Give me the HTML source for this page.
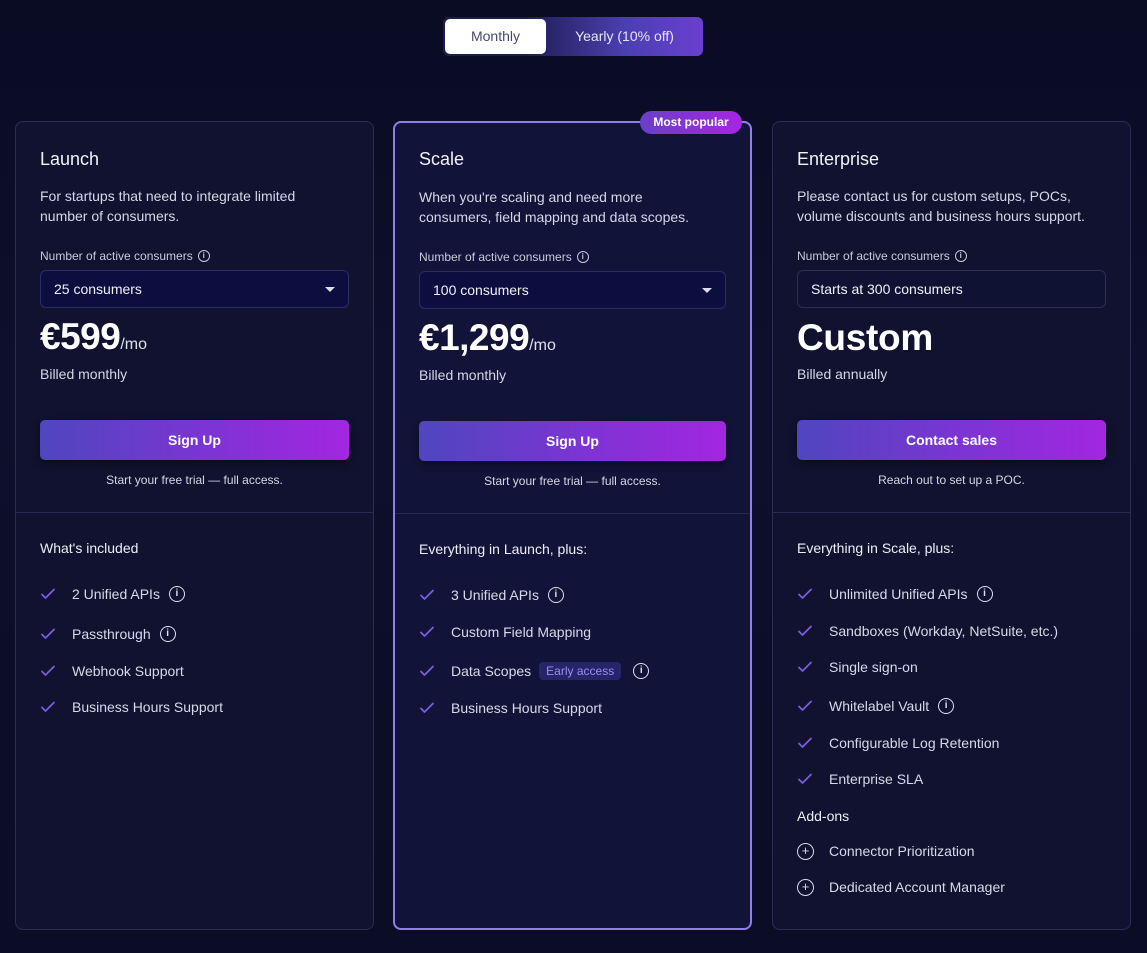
<!DOCTYPE html>
<html><head><meta charset="utf-8"><style>
*{box-sizing:border-box;margin:0;padding:0}
body{width:1147px;height:953px;overflow:hidden;background:linear-gradient(#0a0c24,#0d0f2c 40%,#0b0d26);font-family:"Liberation Sans",sans-serif;color:#e8e8f2;position:relative}
.abs{position:absolute;white-space:nowrap}
.toggle{left:443px;top:17px;width:260px;height:39px;border-radius:6px;background:linear-gradient(90deg,#1d1b50 30%,#4a3fb0 70%,#6a3fd0);}
.toggle .m{position:absolute;left:2px;top:2px;width:101px;height:35px;background:#fff;border-radius:5px;color:#474b6a;font-size:14px;line-height:35px;text-align:center}
.toggle .y{position:absolute;left:103px;width:157px;top:0;line-height:39px;text-align:center;font-size:14px;color:#e6e4f6}
.card{position:absolute;top:121px;height:809px;width:359px;border:1px solid #2b2d55;border-radius:8px;background:#10122f}
.card.s{border:2px solid #8f7fe8;background:#121338}
.t{font-size:18px;color:#f2f2f8}
.d{font-size:14px;line-height:19.5px;color:#d6d7e6;white-space:normal;width:278px}
.lb{font-size:12px;color:#c9cadb;display:flex;align-items:center}
.i{display:inline-block;width:12px;height:12px;border:1.3px solid #c9cadb;border-radius:50%;font-size:8px;line-height:10px;text-align:center;margin-left:5px;font-weight:bold}
.i.b{width:16px;height:16px;border-width:1.6px;font-size:10px;line-height:13px;color:#e0e0ee;border-color:#e0e0ee;margin-left:9px}
.sel{width:309px;height:38px;border:1px solid #2a2d62;border-radius:6px;background:#0b0e3e;font-size:14px;line-height:36px;padding-left:13px;color:#f0f0f8}
.sel.e{background:#0f1233;border-color:#2b2d55}
.sel .ar{position:absolute;right:13px;top:16px;border-left:5px solid transparent;border-right:5px solid transparent;border-top:5px solid #dcdcea}
.pr{font-size:37px;font-weight:bold;color:#fff;letter-spacing:-0.5px}
.pr small{font-size:16px;font-weight:normal;letter-spacing:0;color:#e0e0ee}
.bm{font-size:14px;color:#d6d7e6}
.btn{width:309px;height:40px;border-radius:5px;background:linear-gradient(90deg,#4f46bf,#8a2fd8 70%,#a326e0);font-size:14px;font-weight:bold;line-height:40px;text-align:center;color:#fff;box-shadow:0 3px 8px rgba(0,0,0,.4)}
.cap{font-size:12px;color:#d6d7e6;width:309px;text-align:center}
.hr{left:0;right:0;height:1px;background:#272a50}
.h{font-size:14px;color:#eeeef6}
.f{font-size:14px;color:#d8d9e8;display:flex;align-items:center;height:20px}
.ck{width:32px;display:flex;align-items:center}
.ea{display:inline-block;background:#25266a;color:#9a8df0;font-size:12px;padding:2px 7px;border-radius:4px;margin-left:8px}
.pl{display:inline-block;width:17px;height:17px;border:1.6px solid #d8d9e8;border-radius:50%;font-size:13px;line-height:14px;text-align:center;margin-right:15px}
.badge{left:640px;top:111px;width:102px;height:23px;border-radius:12px;background:linear-gradient(90deg,#6a3fc8,#a526e0);font-size:12px;font-weight:bold;line-height:23px;text-align:center;color:#fff}
</style></head><body>
<svg width="0" height="0" style="position:absolute"><defs><symbol id="c" viewBox="0 0 16 16"><path d="M2 8.5l3.5 3.5L14 3.5" fill="none" stroke="#7b5ce0" stroke-width="1.8" stroke-linecap="round" stroke-linejoin="round"/></symbol></defs></svg>
<div class="abs toggle"><div class="m">Monthly</div><div class="y">Yearly (10% off)</div></div>

<div class="card" style="left:15px">
<div class="abs t" style="left:24px;top:27px">Launch</div>
<div class="abs d" style="left:24px;top:65px">For startups that need to integrate limited number of consumers.</div>
<div class="abs lb" style="left:24px;top:127px">Number of active consumers<span class="i">i</span></div>
<div class="abs sel" style="left:24px;top:148px">25 consumers<span class="ar"></span></div>
<div class="abs pr" style="left:24px;top:194px">€599<small>/mo</small></div>
<div class="abs bm" style="left:24px;top:244px">Billed monthly</div>
<div class="abs btn" style="left:24px;top:298px">Sign Up</div>
<div class="abs cap" style="left:24px;top:351px">Start your free trial — full access.</div>
<div class="abs hr" style="top:390px"></div>
<div class="abs h" style="left:24px;top:418px">What's included</div>
<div class="abs f" style="left:24px;top:462px"><span class="ck"><svg width="16" height="16"><use href="#c"/></svg></span>2 Unified APIs<span class="i b">i</span></div>
<div class="abs f" style="left:24px;top:502px"><span class="ck"><svg width="16" height="16"><use href="#c"/></svg></span>Passthrough<span class="i b">i</span></div>
<div class="abs f" style="left:24px;top:539px"><span class="ck"><svg width="16" height="16"><use href="#c"/></svg></span>Webhook Support</div>
<div class="abs f" style="left:24px;top:575px"><span class="ck"><svg width="16" height="16"><use href="#c"/></svg></span>Business Hours Support</div>
</div>

<div class="card s" style="left:393px">
<div class="abs t" style="left:24px;top:26px">Scale</div>
<div class="abs d" style="left:24px;top:65px;width:290px">When you're scaling and need more consumers, field mapping and data scopes.</div>
<div class="abs lb" style="left:24px;top:127px">Number of active consumers<span class="i">i</span></div>
<div class="abs sel" style="left:24px;top:148px;width:307px">100 consumers<span class="ar"></span></div>
<div class="abs pr" style="left:24px;top:194px">€1,299<small>/mo</small></div>
<div class="abs bm" style="left:24px;top:244px">Billed monthly</div>
<div class="abs btn" style="left:24px;top:298px;width:307px">Sign Up</div>
<div class="abs cap" style="left:24px;top:351px;width:307px">Start your free trial — full access.</div>
<div class="abs hr" style="top:390px"></div>
<div class="abs h" style="left:24px;top:418px">Everything in Launch, plus:</div>
<div class="abs f" style="left:24px;top:462px"><span class="ck"><svg width="16" height="16"><use href="#c"/></svg></span>3 Unified APIs<span class="i b">i</span></div>
<div class="abs f" style="left:24px;top:499px"><span class="ck"><svg width="16" height="16"><use href="#c"/></svg></span>Custom Field Mapping</div>
<div class="abs f" style="left:24px;top:538px"><span class="ck"><svg width="16" height="16"><use href="#c"/></svg></span>Data Scopes<span class="ea">Early access</span><span class="i b" style="margin-left:12px">i</span></div>
<div class="abs f" style="left:24px;top:575px"><span class="ck"><svg width="16" height="16"><use href="#c"/></svg></span>Business Hours Support</div>
</div>
<div class="abs badge">Most popular</div>

<div class="card" style="left:772px">
<div class="abs t" style="left:24px;top:27px">Enterprise</div>
<div class="abs d" style="left:24px;top:65px;width:300px">Please contact us for custom setups, POCs, volume discounts and business hours support.</div>
<div class="abs lb" style="left:24px;top:127px">Number of active consumers<span class="i">i</span></div>
<div class="abs sel e" style="left:24px;top:148px">Starts at 300 consumers</div>
<div class="abs pr" style="left:24px;top:195px;letter-spacing:-.3px">Custom</div>
<div class="abs bm" style="left:24px;top:244px">Billed annually</div>
<div class="abs btn" style="left:24px;top:298px">Contact sales</div>
<div class="abs cap" style="left:24px;top:351px">Reach out to set up a POC.</div>
<div class="abs hr" style="top:390px"></div>
<div class="abs h" style="left:24px;top:418px">Everything in Scale, plus:</div>
<div class="abs f" style="left:24px;top:462px"><span class="ck"><svg width="16" height="16"><use href="#c"/></svg></span>Unlimited Unified APIs<span class="i b">i</span></div>
<div class="abs f" style="left:24px;top:499px"><span class="ck"><svg width="16" height="16"><use href="#c"/></svg></span>Sandboxes (Workday, NetSuite, etc.)</div>
<div class="abs f" style="left:24px;top:535px"><span class="ck"><svg width="16" height="16"><use href="#c"/></svg></span>Single sign-on</div>
<div class="abs f" style="left:24px;top:574px"><span class="ck"><svg width="16" height="16"><use href="#c"/></svg></span>Whitelabel Vault<span class="i b">i</span></div>
<div class="abs f" style="left:24px;top:611px"><span class="ck"><svg width="16" height="16"><use href="#c"/></svg></span>Configurable Log Retention</div>
<div class="abs f" style="left:24px;top:647px"><span class="ck"><svg width="16" height="16"><use href="#c"/></svg></span>Enterprise SLA</div>
<div class="abs h" style="left:24px;top:686px">Add-ons</div>
<div class="abs f" style="left:24px;top:719px"><span class="pl">+</span>Connector Prioritization</div>
<div class="abs f" style="left:24px;top:755px"><span class="pl">+</span>Dedicated Account Manager</div>
</div>
</body></html>
